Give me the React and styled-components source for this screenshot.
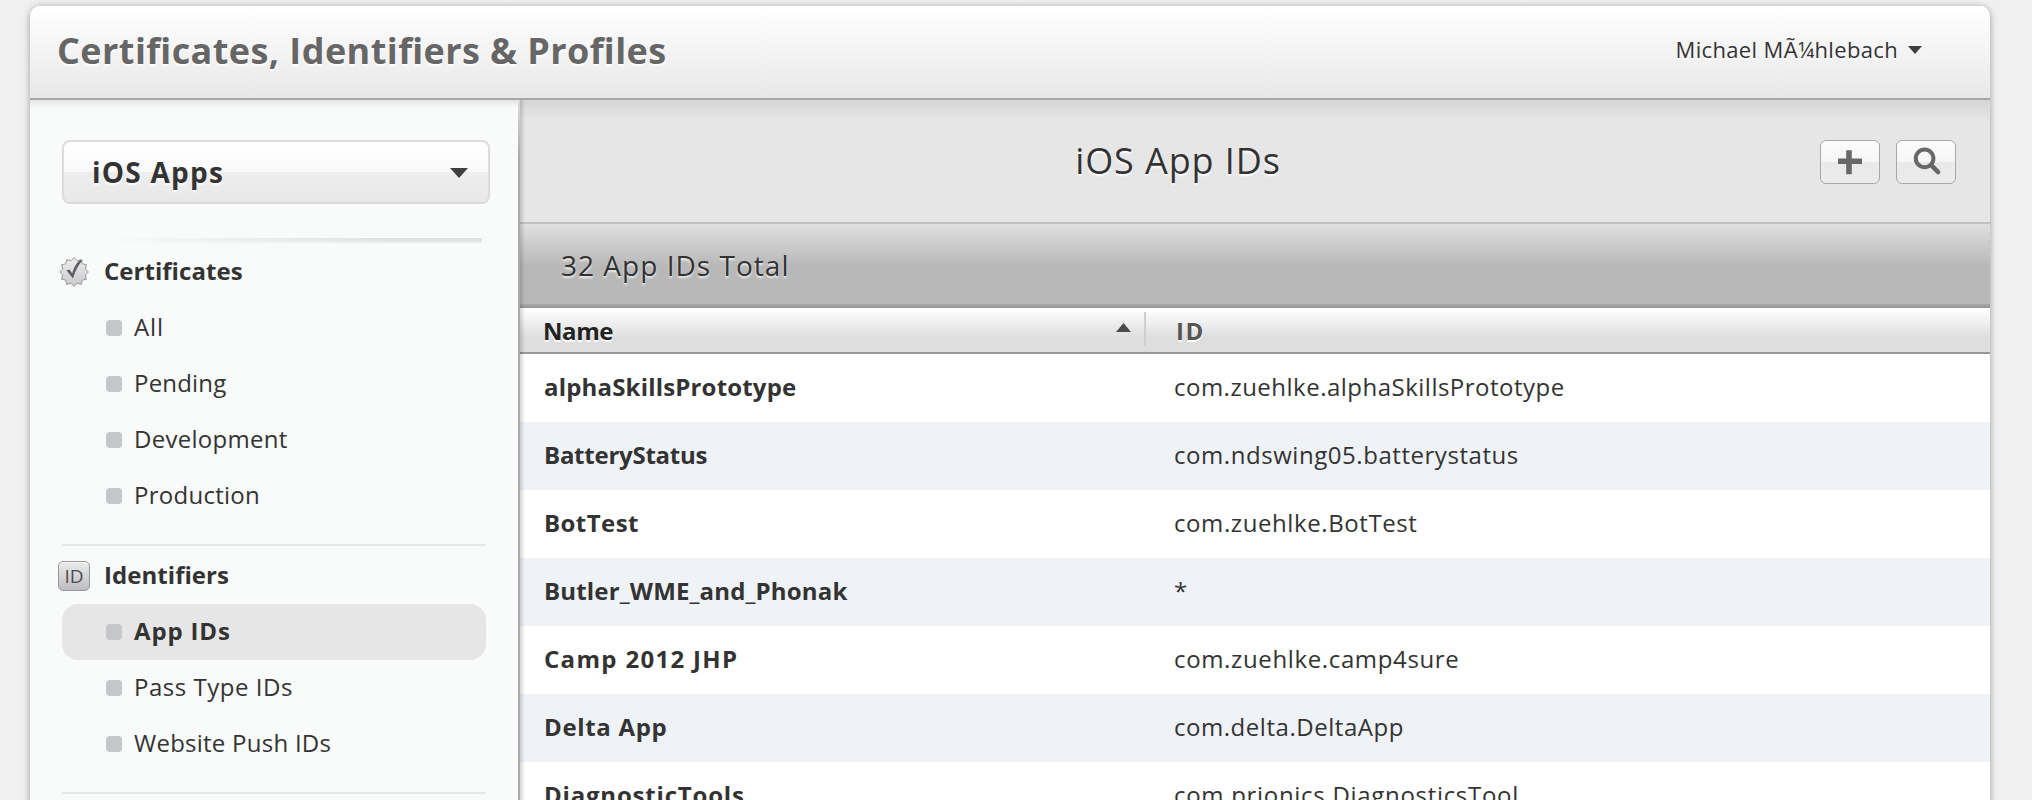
import React from 'react';
import styled, { createGlobalStyle, css } from 'styled-components';

const GlobalStyle = createGlobalStyle`
  *, *::before, *::after { box-sizing: border-box; }
  body {
    margin: 0;
    background: #f0f0f0;
    color: #333;
    font-family: "Open Sans", "Noto Sans", sans-serif;
    font-feature-settings: "liga" 1;
    overflow: hidden;
  }
  h1, h2, h3, ul { margin: 0; padding: 0; font: inherit; }
  ul { list-style: none; }
`;

const Page = styled.div`
  height: 800px;
  padding: 6px 42px 0 30px;
  overflow: hidden;
`;

const Panel = styled.div`
  display: flex;
  flex-direction: column;
  height: 820px;
  border-radius: 10px 10px 0 0;
  background: #fff;
  box-shadow: 0 1px 7px rgba(0, 0, 0, 0.36);
  overflow: hidden;
`;

const Label = styled.span`
  white-space: nowrap;
  letter-spacing: ${(p) => p.$spacing || 0}px;
`;

const Header = styled.header`
  flex: none;
  display: flex;
  justify-content: space-between;
  align-items: center;
  height: 94px;
  padding: 0 68px 0 27px;
  border-bottom: 2px solid #a6a6a6;
  background: linear-gradient(#fff, #e8e8e8);
`;

const Title = styled.h1`
  padding-bottom: 2px;
  font-size: 36px;
  font-weight: 700;
  line-height: 48px;
  color: #666;
  text-shadow: 0 2px 2px #fff;
`;

const UserMenu = styled.div`
  display: flex;
  align-items: center;
  gap: 10px;
  padding-bottom: 6px;
  font-size: 22px;
  line-height: 30px;
  text-shadow: 0 2px 2px #fff;

  svg { display: block; margin-top: 2px; }
`;

const Body = styled.div`
  flex: 1;
  display: flex;
  min-height: 0;
`;

const Sidebar = styled.nav`
  flex: none;
  width: 488px;
  padding: 40px 32px 0;
  background: linear-gradient(rgba(0, 0, 0, 0.09), rgba(0, 0, 0, 0) 8px), #f9fbfa;
`;

const SidebarEdge = styled.div`
  flex: none;
  width: 2px;
  background: linear-gradient(#dcdcdc, #a9a9a9 60px);
`;

const PlatformSelect = styled.div`
  display: flex;
  align-items: center;
  justify-content: space-between;
  width: 428px;
  height: 64px;
  padding: 0 20px 1px 28px;
  border: 2px solid #dcdcdc;
  border-radius: 8px;
  background: linear-gradient(#fff, #fafafa 50%, #eee 50%, #e8e8e8);
  font-size: 28px;
  font-weight: 700;
  text-shadow: 0 2px 2px #fff;

  svg { display: block; margin-top: 3px; }
`;

const FadingRule = styled.div`
  width: 380px;
  height: 6px;
  margin: 34px 0 0 40px;
  background:
    linear-gradient(to right, #f9fbfa, rgba(249, 251, 250, 0) 75%),
    linear-gradient(#dfe1e0, #e3e5e4 50%, #f9fbfa);
`;

const Section = styled.section`
  width: 424px;
  padding-bottom: 20px;

  & + & {
    border-top: 2px solid #e6e8e7;
    padding-top: 2px;
  }
`;

const SectionHeading = styled.h2`
  display: flex;
  align-items: center;
  height: 56px;
  margin-left: -4px;
  font-size: 24px;
  font-weight: 700;

  svg { display: block; flex: none; }
  span { padding: 0 0 4px 14px; }
`;

const NavItem = styled.li`
  display: flex;
  align-items: center;
  gap: 12px;
  height: 56px;
  padding-left: 44px;
  border-radius: 16px;
  font-size: 24px;
  ${(p) => p.$active && css`
    background: #e6e6e6;
    font-weight: 700;
  `}

  &::before {
    content: "";
    width: 16px;
    height: 16px;
    border-radius: 4px;
    background: #c6c7cb;
  }
  span { padding-bottom: 4px; }
`;

const IdBadge = styled.div`
  flex: none;
  display: flex;
  align-items: center;
  justify-content: center;
  width: 32px;
  height: 30px;
  border: 1px solid #97989a;
  border-radius: 5px;
  background: linear-gradient(#ececee, #bdbdc1);
  color: #4c4c4e;
  font-size: 19px;
  font-weight: 400;
  line-height: 26px;
  box-shadow: inset 0 1px 0 #f5f5f5;
`;

const Content = styled.main`
  flex: 1;
  min-width: 0;
  display: flex;
  flex-direction: column;
  position: relative;

  &::before {
    content: "";
    position: absolute;
    z-index: 1;
    inset: 0 auto 0 0;
    width: 5px;
    background: linear-gradient(to right, rgba(0, 0, 0, 0.16), rgba(0, 0, 0, 0));
  }
`;

const Toolbar = styled.div`
  flex: none;
  display: flex;
  gap: 16px;
  height: 122px;
  padding: 0 34px 0 32px;
  background: linear-gradient(#d5d5d5, #e6e6e6 20px);
`;

const ToolbarTitle = styled.h2`
  flex: 1;
  text-align: center;
  font-size: 36px;
  line-height: 122px;
  text-shadow: 0 2px 2px #fff;
`;

const IconButton = styled.button`
  flex: none;
  width: 60px;
  height: 44px;
  margin: 40px 0 0;
  padding: 0;
  border: 1px solid #a9a9a9;
  border-radius: 6px;
  background: linear-gradient(#fbfbfb, #f6f6f6 50%, #e9e9e9 50%, #ececec);

  svg { display: block; }
`;

const SummaryBar = styled.div`
  flex: none;
  display: flex;
  align-items: center;
  height: 86px;
  padding: 0 0 0 41px;
  border-top: 2px solid #c0c0c0;
  border-bottom: 2px solid #979797;
  box-shadow: inset 0 -2px #a5a5a5;
  background: linear-gradient(#dfdfdf, #b8b8b8 42px);
  font-size: 28px;
  text-shadow: 0 2px 2px rgba(255, 255, 255, 0.75);
`;

const HeaderRow = styled.div`
  flex: none;
  display: flex;
  height: 46px;
  padding: 4px 0;
  border-bottom: 2px solid #979797;
  background: linear-gradient(#fff, #dedede 30px);
  font-size: 24px;
  font-weight: 700;
  line-height: 37px;
  text-shadow: 0 2px 0 #fff;
`;

const NameHeader = styled.div`
  display: flex;
  justify-content: space-between;
  width: 626px;
  height: 34px;
  padding: 0 13px 0 23px;
  border-right: 2px solid #cfcfcf;
  color: #222;

  svg { display: block; margin-top: 11px; }
`;

const IdHeader = styled.div`
  padding-left: 30px;
  color: #555;
`;

const Row = styled.li`
  display: flex;
  align-items: center;
  height: 68px;
  padding: 0 0 4px 24px;
  font-size: 24px;
  background: #fff;

  &:nth-child(even) { background: #eff2f7; }
`;

const NameCell = styled.div`
  width: 630px;
  font-weight: 700;
`;

const Triangle = ({ w, h, up }) => (
  <svg width={w} height={h} viewBox={`0 0 ${w} ${h}`}>
    <path d={up ? `M0 ${h}L${w / 2} 0L${w} ${h}Z` : `M0 0H${w}L${w / 2} ${h}Z`} fill={up ? '#4a4a4a' : '#3f3f3f'} />
  </svg>
);

const sealPoints = Array.from({ length: 24 }, (_, i) => {
  const r = i % 2 ? 11.6 : 14.4;
  const a = (i * Math.PI) / 12 - Math.PI / 2;
  return `${(16 + r * Math.cos(a)).toFixed(2)},${(15 + r * Math.sin(a)).toFixed(2)}`;
}).join(' ');

const SealIcon = () => (
  <svg width="32" height="30" viewBox="0 0 32 30">
    <defs>
      <linearGradient id="seal" x1="0" y1="0" x2="0" y2="1">
        <stop offset="0" stopColor="#ececed" />
        <stop offset="1" stopColor="#c9c9cc" />
      </linearGradient>
    </defs>
    <polygon points={sealPoints} fill="url(#seal)" stroke="#98999b" strokeWidth="1" />
    <path d="M8.6 13.6L11.4 12.4L14.2 16.6C15.8 10.6 18 6.2 21.4 3.4L24.8 3C20.4 7.6 17.4 13.4 15 21.4Z" fill="#5c5c5e" />
  </svg>
);

const PlusIcon = () => (
  <svg width="58" height="42" viewBox="0 0 58 42">
    <path d="M17 20h24M28 9v24" transform="translate(0 .3)" fill="none" stroke="#686868" strokeWidth="5.6" />
  </svg>
);

const SearchIcon = () => (
  <svg width="58" height="42" viewBox="0 0 58 42">
    <circle cx="27.6" cy="17.4" r="8.8" fill="none" stroke="#686868" strokeWidth="4" />
    <path d="M34 23.8L41 31" fill="none" stroke="#686868" strokeWidth="4.6" strokeLinecap="round" />
  </svg>
);

const sections = [
  {
    title: 'Certificates',
    spacing: 0.05,
    icon: <SealIcon />,
    items: [
      ['All', 0.88],
      ['Pending', 0.2],
      ['Development', 0.28],
      ['Production', 0.26],
    ],
  },
  {
    title: 'Identifiers',
    spacing: 0.05,
    icon: <IdBadge>ID</IdBadge>,
    items: [
      ['App IDs', 0.85, true],
      ['Pass Type IDs', 0.53],
      ['Website Push IDs', 0.25],
    ],
  },
];

const appIds = [
  ['alphaSkillsPrototype', 0.18, 'com.zuehlke.alphaSkillsPrototype', 0.49],
  ['BatteryStatus', -0.25, 'com.ndswing05.batterystatus', 0.55],
  ['BotTest', 0.43, 'com.zuehlke.BotTest', 0.59],
  ['Butler_WME_and_Phonak', 0.17, '*', 0],
  ['Camp 2012 JHP', 1.32, 'com.zuehlke.camp4sure', 0.64],
  ['Delta App', 0.67, 'com.delta.DeltaApp', 0.54],
  ['DiagnosticTools', 0.8, 'com.prionics.DiagnosticsTool', 0.69],
];

export default function App() {
  return (
    <>
      <GlobalStyle />
      <Page>
        <Panel>
          <Header>
            <Title><Label $spacing={0.43}>Certificates, Identifiers &amp; Profiles</Label></Title>
            <UserMenu>
              <Label $spacing={0.34}>Michael MÃ¼hlebach</Label>
              <Triangle w={14} h={8} />
            </UserMenu>
          </Header>
          <Body>
            <Sidebar>
              <PlatformSelect>
                <Label $spacing={1.25}>iOS Apps</Label>
                <Triangle w={18} h={10} />
              </PlatformSelect>
              <FadingRule />
              {sections.map((section) => (
                <Section key={section.title}>
                  <SectionHeading>
                    {section.icon}
                    <Label $spacing={section.spacing}>{section.title}</Label>
                  </SectionHeading>
                  <ul>
                    {section.items.map(([name, spacing, active]) => (
                      <NavItem key={name} $active={active}>
                        <Label $spacing={spacing}>{name}</Label>
                      </NavItem>
                    ))}
                  </ul>
                </Section>
              ))}
              <Section />
            </Sidebar>
            <SidebarEdge />
            <Content>
              <Toolbar>
                <ToolbarTitle><Label $spacing={0.91}>iOS App IDs</Label></ToolbarTitle>
                <IconButton aria-label="Add"><PlusIcon /></IconButton>
                <IconButton aria-label="Search"><SearchIcon /></IconButton>
              </Toolbar>
              <SummaryBar><Label $spacing={1.02}>32 App IDs Total</Label></SummaryBar>
              <HeaderRow>
                <NameHeader>
                  <Label $spacing={-0.4}>Name</Label>
                  <Triangle w={15} h={9} up />
                </NameHeader>
                <IdHeader><Label $spacing={1.5}>ID</Label></IdHeader>
              </HeaderRow>
              <ul>
                {appIds.map(([name, nameSpacing, id, idSpacing]) => (
                  <Row key={name}>
                    <NameCell><Label $spacing={nameSpacing}>{name}</Label></NameCell>
                    <Label $spacing={idSpacing}>{id}</Label>
                  </Row>
                ))}
              </ul>
            </Content>
          </Body>
        </Panel>
      </Page>
    </>
  );
}
